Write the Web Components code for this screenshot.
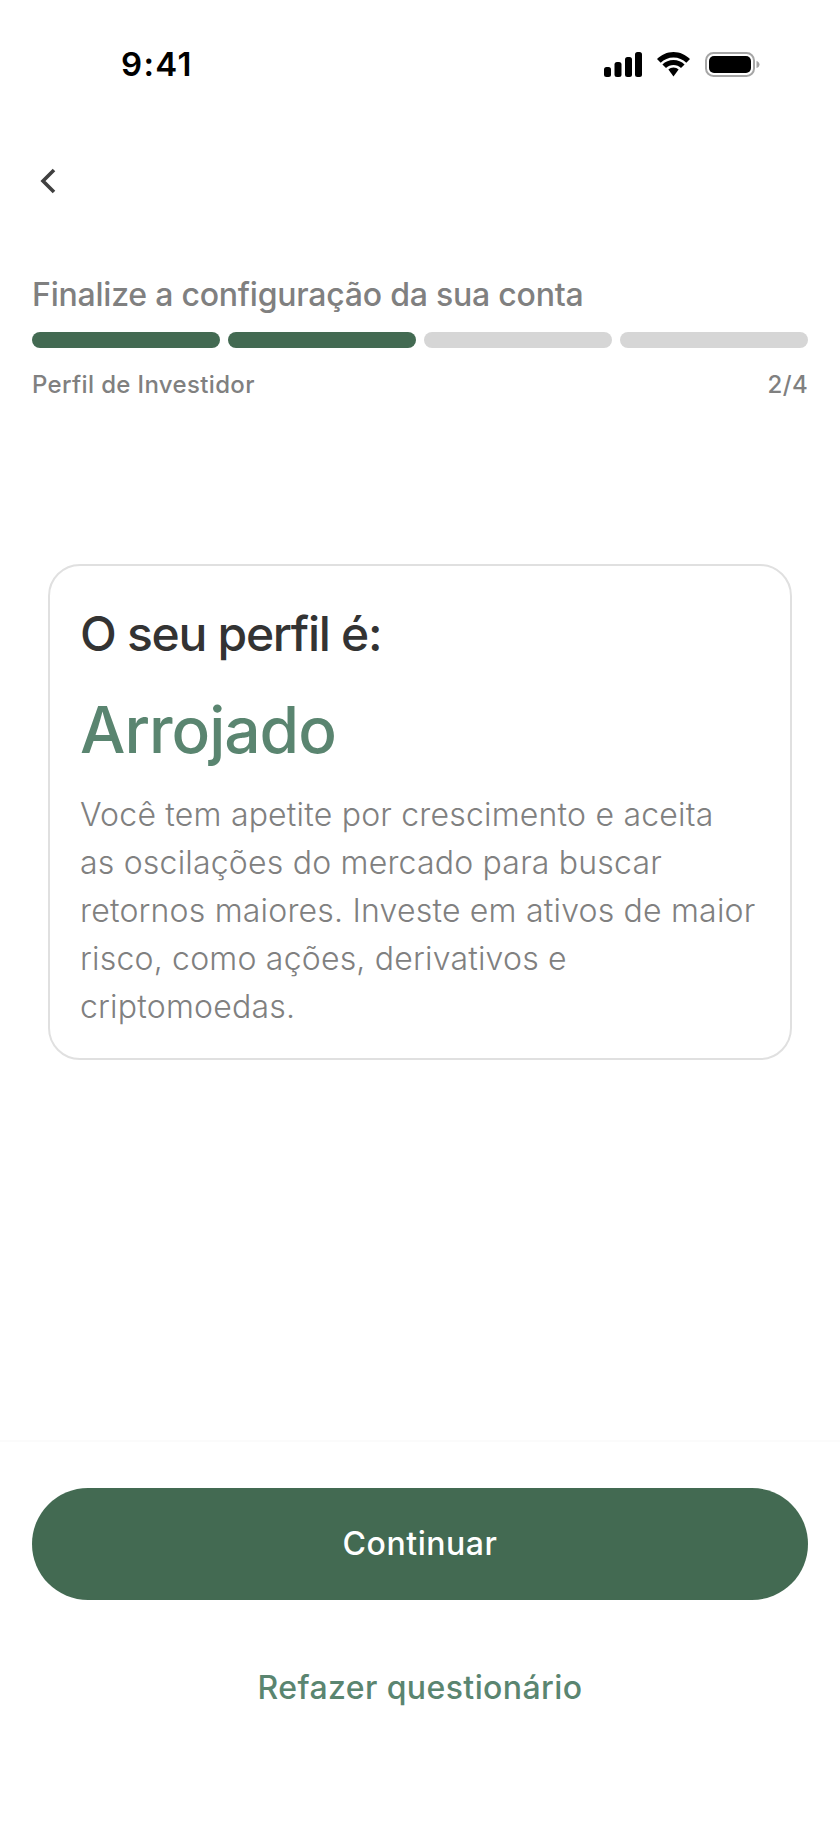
<!DOCTYPE html>
<html lang="pt-BR">
<head>
<meta charset="utf-8">
<title>Perfil de Investidor</title>
<style>
  html, body { margin: 0; background: #fff; }
  body { font-family: Inter, "Noto Sans", sans-serif; }
</style>
</head>
<body>
<profile-screen>
  <status-bar slot="status"></status-bar>
  <back-nav slot="nav"></back-nav>
  <setup-progress slot="progress" step="2" total="4" label="Perfil de Investidor">Finalize a configuração da sua conta</setup-progress>
  <result-card slot="card" heading="O seu perfil é:" result="Arrojado">Você tem apetite por crescimento e aceita<br>as oscilações do mercado para buscar<br>retornos maiores. Investe em ativos de maior<br>risco, como ações, derivativos e<br>criptomoedas.</result-card>
  <action-footer slot="footer"></action-footer>
</profile-screen>

<script>
class ProfileScreen extends HTMLElement {
  constructor() {
    super();
    this.attachShadow({ mode: "open" });
    this.shadowRoot.innerHTML = `
      <style>
        :host { display: flex; flex-direction: column; width: 840px; height: 1824px; background: #fff; overflow: hidden; }
        .middle { flex: 1; display: flex; flex-direction: column; }
      </style>
      <slot name="status"></slot>
      <slot name="nav"></slot>
      <slot name="progress"></slot>
      <div class="middle"><slot name="card"></slot></div>
      <slot name="footer"></slot>
    `;
  }
}

class StatusBar extends HTMLElement {
  constructor() {
    super();
    this.attachShadow({ mode: "open" });
    this.shadowRoot.innerHTML = `
      <style>
        :host { display: flex; align-items: center; justify-content: space-between; height: 64px; padding: 32px 0 0 121px; box-sizing: content-box; }
        .time { font: 600 33px/64px Inter, sans-serif; color: #000; letter-spacing: 1.300px; }
        .icons { display: flex; align-items: center; gap: 14px; margin-right: 80px; }
        svg { display: block; }
      </style>
      <span class="time">9:41</span>
      <div class="icons">
        <svg width="38" height="25" viewBox="0 0 38 25"><rect x="0" y="15" width="7" height="10" rx="2.500"/><rect x="10.500" y="10" width="7" height="15" rx="2.500"/><rect x="21" y="5" width="7" height="20" rx="2.500"/><rect x="31" y="0" width="7" height="25" rx="2.500"/></svg>
        <svg width="35" height="25" viewBox="0 0 35 25"><path d="M17.500 5.500c5 0 9.400 2 12.800 5.200L34 7C29.700 2.800 23.900 0 17.500 0S5.300 2.800 1 7l3.700 3.700C8.100 7.500 12.500 5.500 17.500 5.500z"/><path d="M17.500 13c2.900 0 5.500 1.100 7.500 3l3.600-3.600C25.700 9.600 21.800 8 17.500 8S9.300 9.600 6.400 12.400L10 16c2-1.900 4.600-3 7.500-3z"/><path d="M17.500 15.500c-2 0-3.800.8-5.100 2.100l5.100 6.900 5.100-6.900c-1.300-1.300-3.100-2.100-5.100-2.100z"/></svg>
        <svg width="55" height="25" viewBox="0 0 55 25"><rect x="1" y="1" width="48" height="23" rx="7.500" fill="none" stroke="#a6a6a6" stroke-width="2"/><rect x="4" y="4" width="42" height="17" rx="5"/><path d="M51.500 9c2 .5 3 2 3 3.500s-1 3-3 3.500z" fill="#a6a6a6"/></svg>
      </div>
    `;
  }
}

class BackNav extends HTMLElement {
  constructor() {
    super();
    this.attachShadow({ mode: "open" });
    this.shadowRoot.innerHTML = `
      <style>
        :host { display: block; padding: 72px 0 0 40px; height: 26px; }
        svg { display: block; }
      </style>
      <svg width="16" height="26" viewBox="0 0 16 26"><path d="M14 2 3 13l11 11" fill="none" stroke="#404040" stroke-width="3.600"/></svg>
    `;
  }
}

class SetupProgress extends HTMLElement {
  connectedCallback() {
    if (this.shadowRoot) return;
    const total = Number(this.getAttribute("total"));
    const step = Number(this.getAttribute("step"));
    let bars = "";
    for (let i = 0; i < total; i++) bars += `<i class="${i < step ? "on" : ""}"></i>`;
    this.attachShadow({ mode: "open" });
    this.shadowRoot.innerHTML = `
      <style>
        :host { display: block; padding: 81px 32px 0; }
        .title { font: 500 32px/40px Inter, sans-serif; color: #808080; letter-spacing: -.22px; }
        .bars { display: grid; grid-template-columns: repeat(${total}, 1fr); gap: 8px; margin-top: 17px; }
        i { display: block; height: 16px; border-radius: 8px; background: #d6d6d6; }
        i.on { background: #436a52; }
        .meta { display: flex; justify-content: space-between; margin-top: 21px; font: 500 24px/32px Inter, sans-serif; color: #808080; letter-spacing: .35px; }
      </style>
      <div class="title"><slot></slot></div>
      <div class="bars">${bars}</div>
      <div class="meta"><span>${this.getAttribute("label")}</span><span>${step}/${total}</span></div>
    `;
  }
}

class ResultCard extends HTMLElement {
  connectedCallback() {
    if (this.shadowRoot) return;
    this.attachShadow({ mode: "open" });
    this.shadowRoot.innerHTML = `
      <style>
        :host { display: block; margin: 163px 48px 0; padding: 38px 30px 27px; border: 2px solid #e0e0e0; border-radius: 32px; background: #fff; }
        .h { font: 500 48px/60px Inter, sans-serif; color: #333; letter-spacing: -1.300px; }
        .r { font: 550 64px/80px Inter, sans-serif; color: #5a8570; letter-spacing: -1px; margin-top: 26px; }
        .p { font: 300 32px/48px Inter, sans-serif; color: #808080; letter-spacing: .2px; margin-top: 21px; white-space: nowrap; }
      </style>
      <div class="h">${this.getAttribute("heading")}</div>
      <div class="r">${this.getAttribute("result")}</div>
      <div class="p"><slot></slot></div>
    `;
  }
}

class ActionFooter extends HTMLElement {
  constructor() {
    super();
    this.attachShadow({ mode: "open" });
    this.shadowRoot.innerHTML = `
      <style>
        :host { display: flex; flex-direction: column; height: 384px; padding: 48px 32px 0; box-sizing: border-box; border-top: 2px solid #fbfbfb; background: #fff; }
        .primary { height: 112px; margin-top: -2px; border-radius: 56px; background: #436a52; color: #fff; display: flex; align-items: center; justify-content: center; font: 500 32px/40px Inter, sans-serif; letter-spacing: .55px; }
        .secondary { margin-top: 68px; text-align: center; font: 500 32px/40px Inter, sans-serif; color: #5a8570; letter-spacing: .4px; }
      </style>
      <div class="primary">Continuar</div>
      <div class="secondary">Refazer questionário</div>
    `;
  }
}

customElements.define("profile-screen", ProfileScreen);
customElements.define("status-bar", StatusBar);
customElements.define("back-nav", BackNav);
customElements.define("setup-progress", SetupProgress);
customElements.define("result-card", ResultCard);
customElements.define("action-footer", ActionFooter);
</script>
</body>
</html>
